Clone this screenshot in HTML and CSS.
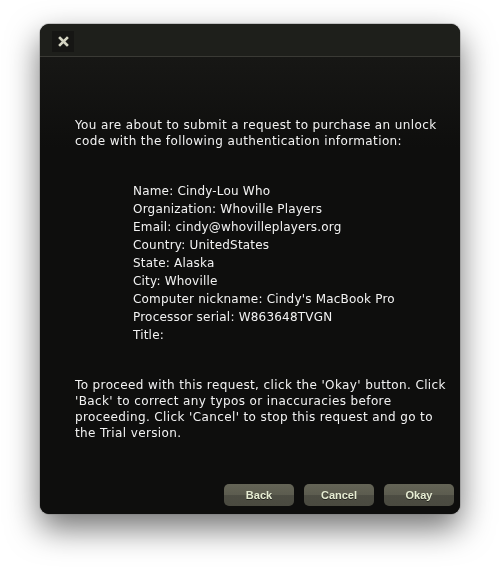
FILE: index.html
```html
<!DOCTYPE html>
<html>
<head>
<meta charset="utf-8">
<link rel="stylesheet" href="styles.css">
</head>
<body>
<div class="frame">
<div class="window">
  <div class="titlebar">
    <div class="close">
      <svg width="11" height="11" viewBox="0 0 11 11"><path d="M2 2 L9 9 M9 2 L2 9" stroke="#d4d4c2" stroke-width="2.6" stroke-linecap="square"/></svg>
    </div>
  </div>
  <div class="body">
    <p class="para">You are about to submit a request to purchase an unlock code with the following authentication information:</p>
    <ul class="info">
      <li>Name: Cindy-Lou Who</li>
      <li>Organization: Whoville Players</li>
      <li>Email: cindy@whovilleplayers.org</li>
      <li>Country: UnitedStates</li>
      <li>State: Alaska</li>
      <li>City: Whoville</li>
      <li>Computer nickname: Cindy's MacBook Pro</li>
      <li>Processor serial: W863648TVGN</li>
      <li>Title:</li>
    </ul>
    <p class="para">To proceed with this request, click the 'Okay' button. Click 'Back' to correct any typos or inaccuracies before proceeding. Click 'Cancel' to stop this request and go to the Trial version.</p>
    <div class="buttons">
      <button class="btn">Back</button>
      <button class="btn">Cancel</button>
      <button class="btn">Okay</button>
    </div>
  </div>
</div>
</div>
</body>
</html>
```
FILE: styles.css
```css
html, body {
  margin: 0;
  padding: 0;
  background: #ffffff;
  min-height: 569px;
}
body {
  padding: 24px 0 0 40px;
  box-sizing: border-box;
}
.frame {
  width: 420px;
  filter: drop-shadow(0 14px 16px rgba(0,0,0,0.55));
}
.window {
  width: 420px;
  height: 490px;
  border-radius: 9px;
  background: #0e0e0d;
  box-shadow: 0 0 0 1px rgba(120,120,120,0.35);
  display: flex;
  flex-direction: column;
  overflow: hidden;
}
.titlebar {
  height: 33px;
  background: #1e1f1b;
  border-bottom: 1px solid #3a3a35;
  padding: 7px 0 0 12px;
  box-sizing: border-box;
  flex: none;
}
.close {
  width: 22px;
  height: 21px;
  background: #161614;
  display: flex;
  align-items: center;
  justify-content: center;
}
.body {
  flex: 1;
  background: linear-gradient(#171715 0px, #0e0e0d 90px);
  padding: 60px 6px 0 35px;
  display: flex;
  flex-direction: column;
  font-family: "DejaVu Sans", sans-serif;
  font-size: 12px;
  letter-spacing: 0.38px;
  color: #f2f2f2;
}
.para {
  margin: 0;
  line-height: 16px;
}
.info {
  list-style: none;
  margin: 33px 0 33px 58px;
  padding: 0;
  line-height: 18px;
  letter-spacing: 0.2px;
}
.buttons {
  margin-top: auto;
  display: flex;
  justify-content: flex-end;
  gap: 10px;
  padding: 0 0 8px 0;
}
.btn {
  width: 70px;
  height: 22px;
  border: none;
  border-radius: 5px;
  background: linear-gradient(#646456 0%, #5c5c4f 50%, #4d4d43 50%, #4a4a40 100%);
  color: #e6ecd2;
  font-family: "Liberation Sans", sans-serif;
  font-weight: bold;
  font-size: 11px;
  letter-spacing: 0;
  text-shadow: 0 1px 0 rgba(0,0,0,0.5);
  padding: 0;
}
```
